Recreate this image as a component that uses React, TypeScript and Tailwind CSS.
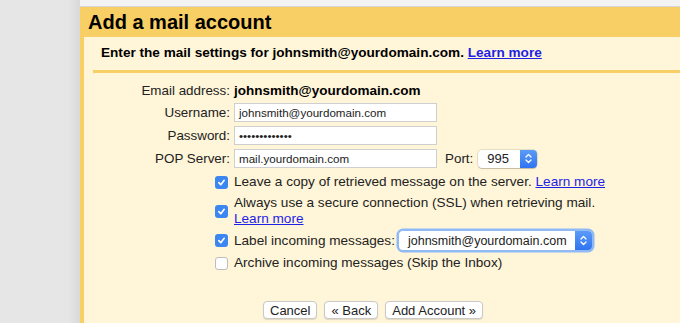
import React from "react";

function Check({ on }: { on: boolean }) {
  if (!on) {
    return (
      <span className="inline-block h-[13px] w-[13px] shrink-0 rounded-[3px] border border-[#bdbdbd] bg-white" />
    );
  }
  return (
    <span className="inline-flex h-[13px] w-[13px] shrink-0 items-center justify-center rounded-[3px] bg-[#3c86f2]">
      <svg width="9" height="9" viewBox="0 0 10 10" fill="none">
        <path d="M2 5.2 L4.2 7.4 L8 2.6" stroke="white" strokeWidth="1.8" strokeLinecap="round" strokeLinejoin="round" />
      </svg>
    </span>
  );
}

function Stepper() {
  return (
    <span className="flex w-[17px] items-center justify-center self-stretch rounded-r-[4px] bg-gradient-to-b from-[#5b9bf7] to-[#2f74ef]">
      <svg width="7" height="11" viewBox="0 0 7 11" fill="none">
        <path d="M1 4 L3.5 1.5 L6 4 M1 7 L3.5 9.5 L6 7" stroke="white" strokeWidth="1.3" strokeLinecap="round" strokeLinejoin="round" />
      </svg>
    </span>
  );
}

function TextInput({ value }: { value: string }) {
  return (
    <div className="flex h-[19px] w-[203px] items-center border border-[#cfcfcf] bg-white pl-[4px] text-[11.6px] text-[#222]">
      {value}
    </div>
  );
}

function Btn({ label }: { label: string }) {
  return (
    <button className="h-[18px] rounded-[4px] border border-[#c9c9c9] bg-white px-[6px] text-[13px] leading-none text-[#222] shadow-[0_1px_1px_rgba(0,0,0,0.12)]">
      {label}
    </button>
  );
}

export default function App() {
  return (
    <div className="flex h-[323px] w-[680px] overflow-hidden bg-[#e6e6e6] font-['Liberation_Sans',Arial,sans-serif] text-[#111]">
      {/* Left backdrop */}
      <div className="w-[80px] shrink-0 bg-gradient-to-r from-[#e6e6e6] from-85% to-[#d9d9d9]" />

      <div className="flex flex-1 flex-col">
        {/* Top strip */}
        <div className="h-[7px] shrink-0 border-b border-[#d6d6d6] bg-[#f3f3f3]" />

        <div className="flex flex-1 flex-col border-l-4 border-[#f8cf64] bg-[#fff5d8]">
          {/* Header */}
          <div className="flex h-[30px] shrink-0 items-center bg-[#f8cf64] pl-[4px] text-[20px] font-bold text-black">
            Add a mail account
          </div>

          {/* Subheader */}
          <div className="flex h-[33px] shrink-0 items-center pl-[17px] text-[13.6px] font-bold text-black">
            Enter the mail settings for johnsmith@yourdomain.com.&nbsp;
            <a className="text-[#1f1fe6] underline">Learn more</a>
          </div>
          <div className="ml-[9px] h-[3px] shrink-0 bg-[#f8cf64]" />

          {/* Form */}
          <div className="mt-[10px] grid grid-cols-[146px_auto] items-center gap-x-[4px] gap-y-[4px] text-[13.4px] leading-[19px] text-[#222]">
            <div className="text-right leading-[16px]">Email address:</div>
            <div className="text-[13.5px] font-bold leading-[16px] text-black">johnsmith@yourdomain.com</div>

            <div className="text-right">Username:</div>
            <TextInput value="johnsmith@yourdomain.com" />

            <div className="text-right">Password:</div>
            <TextInput value="•••••••••••••" />

            <div className="text-right">POP Server:</div>
            <div className="flex items-center gap-[8px]">
              <TextInput value="mail.yourdomain.com" />
              <span>Port:</span>
              <div className="ml-[-3px] flex h-[18px] w-[59px] items-stretch rounded-[4px] bg-white shadow-[0_0_0_0.5px_rgba(0,0,0,0.2),0_1px_1px_rgba(0,0,0,0.15)]">
                <span className="flex flex-1 items-center pl-[9px] text-[13px]">995</span>
                <Stepper />
              </div>
            </div>
          </div>

          {/* Options */}
          <div className="mt-[6px] flex flex-col gap-[5px] pl-[131px] text-[13.6px] leading-[16px] text-[#222]">
            <div className="flex items-center gap-[6px]">
              <Check on />
              <span>
                Leave a copy of retrieved message on the server.{" "}
                <a className="text-[#1f1fe6] underline">Learn more</a>
              </span>
            </div>
            <div className="flex items-center gap-[6px]">
              <Check on />
              <span>
                Always use a secure connection (SSL) when retrieving mail.
                <br />
                <a className="text-[#1f1fe6] underline">Learn more</a>
              </span>
            </div>
            <div className="-mt-[1px] flex items-center gap-[6px]">
              <Check on />
              <span>Label incoming messages:</span>
              <div className="ml-[-2px] flex h-[19px] w-[193px] items-stretch rounded-[4px] bg-white shadow-[0_0_0_2.5px_#8fbaf5]">
                <span className="flex flex-1 items-center pl-[9px] text-[12.5px]">johnsmith@yourdomain.com</span>
                <Stepper />
              </div>
            </div>
            <div className="flex items-center gap-[6px]">
              <Check on={false} />
              <span>Archive incoming messages (Skip the Inbox)</span>
            </div>
          </div>

          {/* Actions */}
          <div className="mt-[30px] flex gap-[7px] pl-[179px]">
            <Btn label="Cancel" />
            <Btn label="« Back" />
            <Btn label="Add Account »" />
          </div>
        </div>
      </div>
    </div>
  );
}
